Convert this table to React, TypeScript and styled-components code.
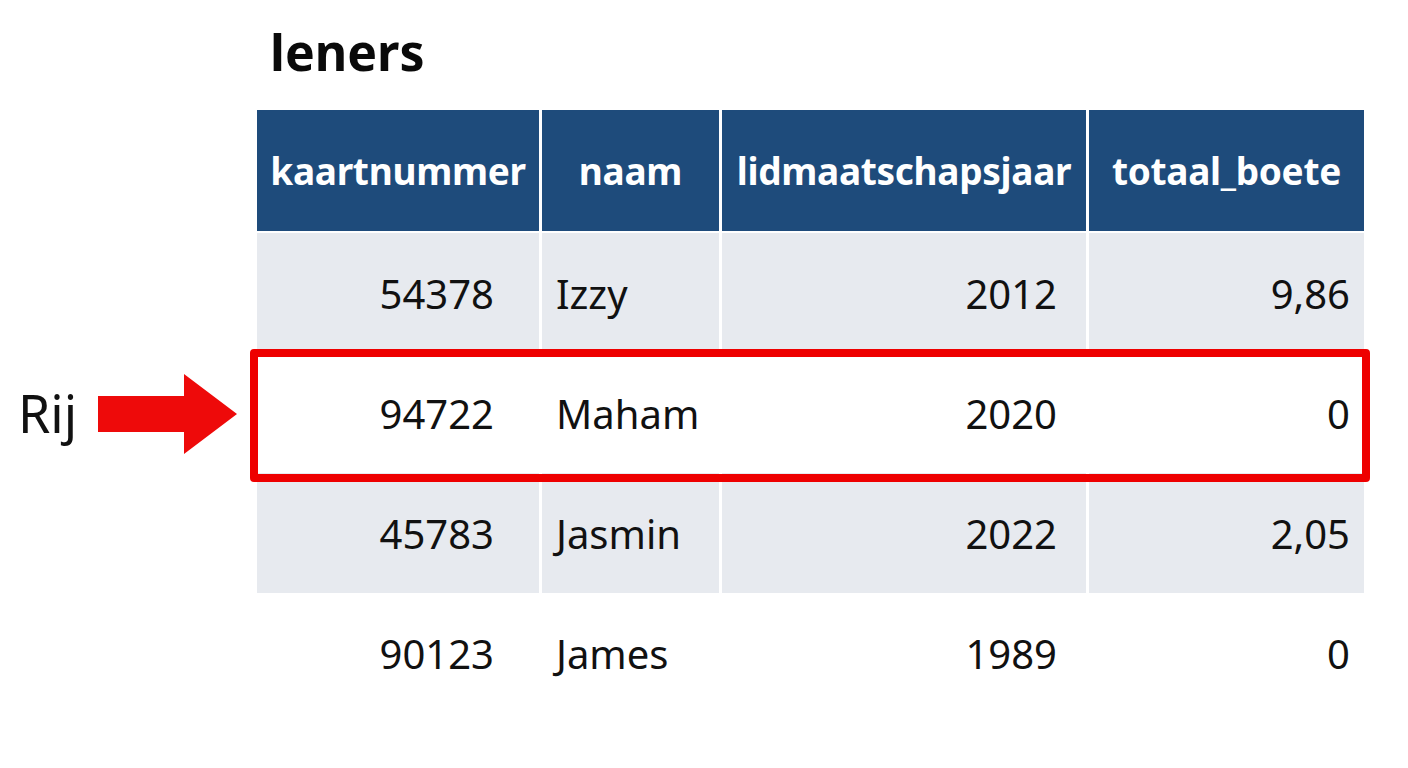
import React from "react";
import styled, { createGlobalStyle } from "styled-components";

const GlobalStyle = createGlobalStyle`
  html, body {
    margin: 0;
    padding: 0;
    background: #ffffff;
  }
  body {
    font-family: "Noto Sans", "Open Sans", sans-serif;
    color: #111111;
  }
`;

type Lener = {
  kaartnummer: string;
  naam: string;
  jaar: string;
  boete: string;
  marked?: boolean;
};

const leners: Lener[] = [
  { kaartnummer: "54378", naam: "Izzy", jaar: "2012", boete: "9,86" },
  { kaartnummer: "94722", naam: "Maham", jaar: "2020", boete: "0", marked: true },
  { kaartnummer: "45783", naam: "Jasmin", jaar: "2022", boete: "2,05" },
  { kaartnummer: "90123", naam: "James", jaar: "1989", boete: "0" },
];

const Arrow = () => (
  <svg width="139" height="88" viewBox="0 0 139 88">
    <polygon
      points="0,27 86,27 86,5 139,45 86,85 86,63 0,63"
      fill="#ee0a0a"
    />
  </svg>
);

const App = () => {
  return (
    <>
      <GlobalStyle />
      <Sheet>
        <Gutter />
        <Title>leners</Title>

        <Gutter />
        <HeadCell>kaartnummer</HeadCell>
        <HeadCell>naam</HeadCell>
        <HeadCell>lidmaatschapsjaar</HeadCell>
        <HeadCell>totaal_boete</HeadCell>

        {leners.map((l, i) => (
          <React.Fragment key={l.kaartnummer}>
            <Gutter>
              {l.marked && (
                <>
                  <Label>Rij</Label>
                  <Arrow />
                </>
              )}
            </Gutter>
            <DataRow $marked={!!l.marked}>
              <Cell $shade={i % 2 === 0} $align="right" $pad="0 45px 0 0">
                {l.kaartnummer}
              </Cell>
              <Cell $shade={i % 2 === 0} $align="left" $pad="0 0 0 14px">
                {l.naam}
              </Cell>
              <Cell $shade={i % 2 === 0} $align="right" $pad="0 29px 0 0">
                {l.jaar}
              </Cell>
              <Cell $shade={i % 2 === 0} $align="right" $pad="0 14px 0 0">
                {l.boete}
              </Cell>
            </DataRow>
          </React.Fragment>
        ))}
      </Sheet>
    </>
  );
};

export default App;

const Sheet = styled.div`
  display: grid;
  grid-template-columns: 254px 282px 177px 364px 275px;
  grid-template-rows: 110px 123px repeat(4, 120px);
  column-gap: 3px;
  width: 1364px;
  height: 768px;
  align-content: start;
`;

const Gutter = styled.div`
  display: flex;
  align-items: center;
  gap: 21px;
  padding-left: 18px;
  margin-right: -3px;
`;

const Label = styled.span`
  font-size: 52px;
  line-height: 1;
  color: #111111;
`;

const Title = styled.h1`
  grid-column: 2 / -1;
  margin: 0;
  padding: 22px 0 0 13px;
  font-size: 50px;
  line-height: 60px;
  font-weight: 700;
  color: #0a0a0a;
`;

const HeadCell = styled.div`
  display: flex;
  align-items: center;
  justify-content: center;
  height: 121px;
  background: #1e4b7b;
  color: #ffffff;
  font-size: 37px;
  font-weight: 700;
  letter-spacing: -0.3px;
  white-space: nowrap;
`;

const DataRow = styled.div<{ $marked: boolean }>`
  grid-column: 2 / -1;
  display: grid;
  grid-template-columns: subgrid;
  position: relative;
  z-index: ${(p) => (p.$marked ? 2 : "auto")};

  ${(p) =>
    p.$marked &&
    `
    &::after {
      content: "";
      position: absolute;
      inset: -4px -6px -9px -7px;
      border: 8px solid #ee0000;
      border-radius: 4px;
      pointer-events: none;
    }
  `}
`;

const Cell = styled.div<{ $shade: boolean; $align: "left" | "right"; $pad: string }>`
  display: flex;
  align-items: center;
  justify-content: ${(p) => (p.$align === "right" ? "flex-end" : "flex-start")};
  padding: ${(p) => p.$pad};
  background: ${(p) => (p.$shade ? "#e7eaef" : "#ffffff")};
  font-size: 40px;
  color: #111111;
  white-space: nowrap;
`;
